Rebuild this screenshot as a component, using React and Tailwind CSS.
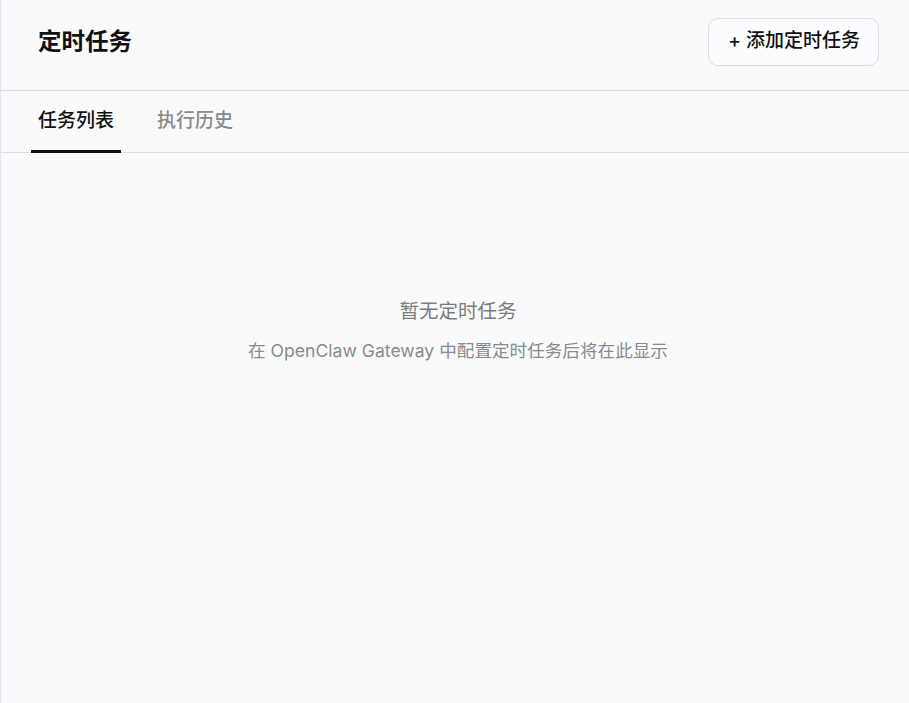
import React from 'react';

const font = { fontFamily: 'Inter, "Noto Sans CJK SC", sans-serif' };

const App = () => {
  return (
    <div
      className="w-full h-[703px] bg-[#f9fafb] border-l border-[#e4e6ea] flex flex-col"
      style={font}
    >
      {/* header */}
      <div className="h-[91px] flex items-center justify-between pl-[37px] pr-[30px] pb-[7px] border-b border-[#dcdde0]">
        <h1 className="text-[23.5px] font-bold text-[#111111]">定时任务</h1>
        <button className="h-[48px] pl-[19px] pr-[18px] rounded-[10px] border border-[#dcdde0] bg-[#fbfcfd] text-[19px] font-medium text-[#111111]">
          + 添加定时任务
        </button>
      </div>

      {/* tabs */}
      <div className="h-[62px] flex items-stretch px-[30px] gap-[29px] border-b border-[#dcdde0]">
        <button className="px-[7px] text-[19px] font-medium text-[#111111] border-b-[3px] border-[#111111] -mb-px pt-[2px]">
          任务列表
        </button>
        <button className="px-[7px] text-[19px] font-medium text-[#8a8a8a] border-b-[3px] border-transparent -mb-px pt-[2px]">
          执行历史
        </button>
      </div>

      {/* empty state */}
      <div className="flex flex-col items-center pt-[143px] pl-[6px]">
        <p className="text-[19.5px] text-[#7c7c7c] leading-[30px]">暂无定时任务</p>
        <p className="text-[17.6px] text-[#8a8a8a] leading-[26px] mt-[12px]">
          在 OpenClaw Gateway 中配置定时任务后将在此显示
        </p>
      </div>
    </div>
  );
};

export default App;
